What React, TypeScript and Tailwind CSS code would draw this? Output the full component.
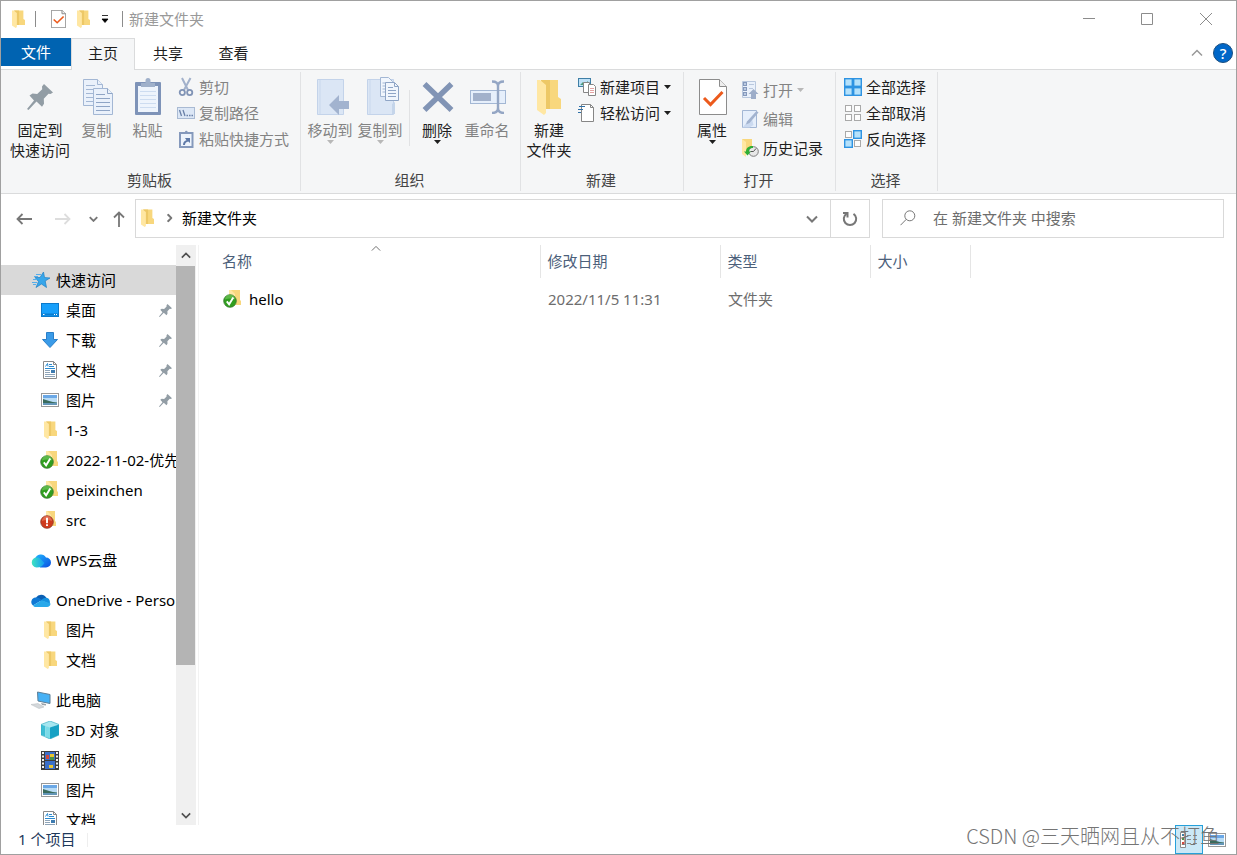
import type { ReactNode } from 'react';
import clsx from 'clsx';

interface IconProps {
  className?: string;
}

/* ---------- 通用图标 ---------- */

const FolderIcon = ({ className = 'h-[18px] w-[13px]' }: IconProps) => (
  <svg viewBox="0 0 24 36" className={className} preserveAspectRatio="none" aria-hidden="true">
    <path d="M4 1h17v17l3 2v10H7z" fill="#f8d77d" />
    <path d="M4 1h9v29H7z" fill="#edc866" />
    <path d="M0 1h3l6 5v28l-2 2-7-5z" fill="#ffe7a3" />
  </svg>
);

const SyncedFolderIcon = () => (
  <svg viewBox="0 0 20 20" className="size-5 shrink-0" aria-hidden="true">
    <path d="M6 1h11v10l1 1v4H6z" fill="#f8d77d" />
    <path d="M6 1h2l4 4v12l-6-2z" fill="#ffe7a3" />
    <circle cx="7" cy="12" r="6.300" fill="#2f9e1e" stroke="#3b7a33" strokeWidth=".800" />
    <path d="M2 10.500a5 5 0 0 1 10 0c-3-1.500-7-1.500-10 0z" fill="#7ccb63" opacity=".6" />
    <path d="M3.800 12.300l2.300 3L10.300 8.500" fill="none" stroke="#fff" strokeWidth="1.900" />
  </svg>
);

const WarningFolderIcon = () => (
  <svg viewBox="0 0 20 20" className="size-5 shrink-0" aria-hidden="true">
    <path d="M6 1h9v10l1 1v4H6z" fill="#f8d77d" />
    <path d="M6 1h1l4 4v12l-5-2z" fill="#ffe7a3" />
    <circle cx="7" cy="12" r="6.300" fill="#cf3a1d" stroke="#8d3a2b" strokeWidth=".800" />
    <path d="M2 11a5 5 0 0 1 10 0c-3-1.500-7-1.500-10 0z" fill="#ee8b6d" opacity=".6" />
    <path d="M7 7.800v5.400M7 14.300v1.700" stroke="#fff" strokeWidth="1.900" />
  </svg>
);

const PinIcon = ({ className = 'size-[13px]' }: IconProps) => (
  <svg viewBox="0 0 26 26" className={className} aria-hidden="true">
    <path
      d="M17 0l9 8.500-2.500 1.500-2-.3-4.700 5 .2 5-2 3-5.500-5.200L1.500 26 0 25l7-8.500-4.500-5 3-2 4.700.5 5-4.800-.2-2.700z"
      fill="#929da5"
    />
  </svg>
);

const DocCheckIcon = ({ className }: IconProps) => (
  <svg viewBox="0 0 28 36" className={className} preserveAspectRatio="none" aria-hidden="true">
    <path
      d="M.500 .500h20l7 7v28H.500z"
      fill="#fff"
      stroke="#8c8c8c"
      vectorEffect="non-scaling-stroke"
    />
    <path d="M20.500 .500v7h7" fill="#eee" stroke="#8c8c8c" vectorEffect="non-scaling-stroke" />
    <path d="M5 19l6.500 6.500L23.500 13" fill="none" stroke="#ec5a1c" strokeWidth="3" />
  </svg>
);

const Caret = ({ className = 'text-[#1e1e1e]' }: IconProps) => (
  <svg viewBox="0 0 7 4" className={clsx('h-1 w-[7px] shrink-0', className)} aria-hidden="true">
    <path d="M0 0h7L3.500 4z" fill="currentColor" />
  </svg>
);

const Chevron = ({ className }: IconProps) => (
  <svg viewBox="0 0 12 8" className={className} fill="none" stroke="currentColor" aria-hidden="true">
    <path d="M1 1.500l5 5 5-5" />
  </svg>
);

/* ---------- 功能区图标 ---------- */

const CopyIcon = () => (
  <svg viewBox="0 0 32 38" className="ml-0.5 h-[38px] w-8" fill="#eaf1fb" stroke="#a3b7d4" aria-hidden="true">
    <path d="M1.500 1.500h14l5 5v21h-19z" />
    <path d="M15.500 1.500v5h5" />
    <path d="M4 7.500h9M4 11.500h13M4 15.500h8M4 19.500h8M4 23.500h8" />
    <path d="M11.500 10.500h14l5 5v21h-19z" />
    <path d="M25.500 10.500v5h5M14 16.500h9M14 20.500h14M14 24.500h14M14 28.500h14M14 32.500h14" stroke="#8fa5c6" />
  </svg>
);

const PasteIcon = () => (
  <svg viewBox="0 0 28 38" className="h-[38px] w-7" aria-hidden="true">
    <rect x="1" y="4" width="26" height="33" rx="1" fill="#7e93b8" />
    <rect x="4" y="8" width="20" height="26" fill="#eef4fc" />
    <path d="M6 13.500h16M6 17.500h16M6 21.500h16M6 25.500h16M6 29.500h16" stroke="#cddcf0" />
    <path d="M7 9V5h4.500V2.500a2.500 2.500 0 0 1 5 0V5H21v4z" fill="#9fb0ca" />
  </svg>
);

const CutIcon = () => (
  <svg viewBox="0 0 18 20" className="h-5 w-[18px]" fill="none" aria-hidden="true">
    <path d="M5 1l6 12M13.500 1L7 13" stroke="#a2b1cb" strokeWidth="2" />
    <circle cx="5.300" cy="15.500" r="2.600" stroke="#8194b6" strokeWidth="1.800" />
    <circle cx="12.700" cy="15.500" r="2.600" stroke="#8194b6" strokeWidth="1.800" />
  </svg>
);

const CopyPathIcon = () => (
  <svg viewBox="0 0 18 12" className="h-3 w-[18px]" aria-hidden="true">
    <rect x=".500" y=".500" width="17" height="11" fill="#dce7f6" stroke="#a9bad3" />
    <path d="M2.500 3l2 6M6 3l2 6M9.500 8.500h1.500M12 8.500h1.500M14.500 8.500h1.500" stroke="#6980a8" strokeWidth="1.300" />
  </svg>
);

const PasteShortcutIcon = () => (
  <svg viewBox="0 0 18 20" className="h-5 w-[18px]" aria-hidden="true">
    <path d="M3 4h12.500v14H3z" fill="#eef4fc" stroke="#8599bc" strokeWidth="2" />
    <path d="M5.500 5V3H8a1.300 1.300 0 0 1 2.600 0H13v2z" fill="#8599bc" />
    <path d="M6 16c0-3 1.500-4.500 3.500-4.800L8 9h5v5l-1.700-1.600C9 13 8 14 8 16z" fill="#5f7aa8" />
  </svg>
);

const MoveToIcon = () => (
  <svg viewBox="0 0 34 40" className="ml-1.5 h-10 w-[34px]" aria-hidden="true">
    <path d="M1.500 2.500h26v35h-26z" fill="#dbe6f5" stroke="#c3d3ea" />
    <path d="M4 3v34" stroke="#c9d8ed" />
    <path d="M13 28l10-10v6h10v8H23v6z" fill="#a2b3cf" />
  </svg>
);

const CopyToIcon = () => (
  <svg viewBox="0 0 34 40" className="ml-1.5 h-10 w-[34px]" aria-hidden="true">
    <path d="M1.500 2.500h26v35h-26z" fill="#dbe6f5" stroke="#c3d3ea" />
    <path d="M4 3v34" stroke="#c9d8ed" />
    <path d="M26 37V27l3-2v12z" fill="#c5d5ea" />
    <path d="M14.500 .500h8l4 4v15h-12z" fill="#f1f6fd" stroke="#a3b7d4" />
    <path d="M16.500 6h4M16.500 9h3M16.500 12h3M16.500 15h3" stroke="#a3b7d4" />
    <path d="M19.500 5.500h9l4 4v14h-13z" fill="#f1f6fd" stroke="#8fa5c6" />
    <path d="M28.500 5.500v4h4M22 10.500h5M22 13.500h8M22 16.500h8M22 19.500h8" fill="none" stroke="#8fa5c6" />
  </svg>
);

const DeleteIcon = () => (
  <svg viewBox="0 0 32 32" className="ml-0.5 size-8" aria-hidden="true">
    <path d="M2.500 3l27 26M29.500 3l-27 26" stroke="#8194b5" strokeWidth="5.500" />
  </svg>
);

const RenameIcon = () => (
  <svg viewBox="0 0 38 34" className="ml-0.5 h-[34px] w-[38px]" fill="none" aria-hidden="true">
    <rect x="1.500" y="10.500" width="35" height="13" fill="#e6effb" stroke="#a3b7d4" />
    <rect x="4" y="13" width="18" height="8" fill="#a2b1cb" />
    <path
      d="M23 1.500c4 0 6 1 6 4.500v22c0 3.500-2 5-6 5M35 1.500c-4 0-6 1-6 4.500M35 33c-4 0-6-1.500-6-5"
      stroke="#94a6c4"
      strokeWidth="2.400"
    />
  </svg>
);

const NewItemIcon = () => (
  <svg viewBox="0 0 18 20" className="h-5 w-[18px]" aria-hidden="true">
    <rect x=".500" y="1.500" width="12" height="8" fill="#bfe1f7" stroke="#3f7fa6" />
    <path d="M2 8l3-3 2 2 3-3v4z" fill="#4b9b7b" />
    <path d="M5.500 5.500h6v10h-6z" fill="#fff" stroke="#868686" />
    <path d="M10.500 7.500h5l2 2v9h-7z" fill="#fff" stroke="#868686" />
    <path d="M12 11.500h4M12 13.500h4M12 15.500h4" stroke="#e4a3a3" />
  </svg>
);

const EasyAccessIcon = () => (
  <svg viewBox="0 0 18 20" className="h-5 w-[18px]" aria-hidden="true">
    <path d="M3.500 1.500h9l3 3v14h-12z" fill="#fff" stroke="#868686" />
    <path d="M12.500 1.500v3h3" fill="none" stroke="#868686" />
    <path d="M1 3.500h6M0 6.500h5M0 9.500h3" stroke="#2f71a8" strokeWidth="1.200" />
  </svg>
);

const OpenIcon = () => (
  <svg viewBox="0 0 18 20" className="h-5 w-[18px]" aria-hidden="true">
    <path d="M1.500 1.500h13v16h-13z" fill="#eaf1fb" stroke="#b9c8de" />
    <path d="M2 2h4v4H2zM2 7h4v4H2zM2 12h4v4H2z" fill="#8599bc" />
    <path d="M3 3h2v2H3zM3 8h2v2H3zM3 13h2v2H3z" fill="#bccbe2" />
    <path d="M8 4.500h5M8 8.500h4" stroke="#b9c8de" />
    <path d="M12.500 9l5 5h-2.500v5h-5v-5H7.500z" fill="#9dadc9" />
  </svg>
);

const EditIcon = () => (
  <svg viewBox="0 0 18 20" className="h-5 w-[18px]" aria-hidden="true">
    <path d="M1.500 1.500h14v17h-14z" fill="#e6effb" stroke="#a3b7d4" />
    <path d="M1.500 18.500l9-10.500 2 8-4 2.500z" fill="#cbdaf0" />
    <path d="M5 15.500l1-3L15.500 2l2 1.500-9 10.500z" fill="#a2b3cf" />
  </svg>
);

const HistoryIcon = () => (
  <svg viewBox="0 0 18 20" className="h-5 w-[18px]" aria-hidden="true">
    <path d="M1 1h10v14H1z" fill="#f8d77d" />
    <path d="M1 1l4 3v15l-4-3z" fill="#ffe7a3" />
    <circle cx="12.500" cy="13.500" r="4.800" fill="#e8e8e8" stroke="#7d7d7d" />
    <path d="M12.500 13.500l2.500-3M12.500 13.500h-3" stroke="#555" />
    <path d="M12 8c-4-.5-7 1.800-7 5.500H3l3.500 4 3.500-4H8c0-2.500 1.500-3.800 4-3.500z" fill="#2fae35" />
  </svg>
);

// 选中的方块边框相连，未选中的方块之间留空
const TilesIcon = ({ tiles }: { tiles: ('on' | 'off')[] }) => (
  <svg viewBox="0 0 18 18" className="size-[18px]" aria-hidden="true">
    {tiles.map((tile, i) => {
      const x = i % 2 === 0 ? 0 : 9;
      const y = i < 2 ? 0 : 9;
      return tile === 'on' ? (
        <rect key={i} x={x + 0.7} y={y + 0.7} width="7.600" height="7.600" fill="#b5e1fb" stroke="#2e93e2" strokeWidth="1.400" />
      ) : (
        <rect key={i} x={x + 1.5} y={y + 1.5} width="6" height="6" fill="#fdfdfd" stroke="#a9a9a9" />
      );
    })}
  </svg>
);

/* ---------- 导航栏图标 ---------- */

const StarIcon = () => (
  <svg viewBox="0 0 18 16" className="h-4 w-[18px]" aria-hidden="true">
    <path
      d="M11.500 0l1 5.500 5.500.5-4.800 3 1.300 6.500-5-3.500L4 15.500l2.500-6L3 5.500h5z"
      fill="#37a6ea"
      stroke="#1f7fc4"
      strokeWidth=".700"
    />
    <path d="M4 2.500h5M2 4.500h4M1 7.500h4M0 10.500h5M1 12.500h3" stroke="#55aeea" />
  </svg>
);

const DesktopIcon = () => (
  <svg viewBox="0 0 18 14" className="h-3.5 w-[18px]" aria-hidden="true">
    <rect x=".500" y=".500" width="17" height="13" fill="#18a0fb" stroke="#0c7acb" />
    <path d="M1 11.500h16" stroke="#0a7ccf" strokeWidth="2" />
    <path d="M2 11.500h1.500M13 11.500h1M15 11.500h1" stroke="#fff" />
  </svg>
);

const DownloadIcon = () => (
  <svg viewBox="0 0 18 18" className="size-[18px]" aria-hidden="true">
    <path d="M5.500 1.500h7v7h4L9 16.500 1.500 8.500h4z" fill="#3a9be8" stroke="#2a7fc8" />
  </svg>
);

const DocumentIcon = () => (
  <svg viewBox="0 0 16 18" className="h-[18px] w-4" aria-hidden="true">
    <path d="M1.500 .500h10l3 3v14h-13z" fill="#fff" stroke="#8a8a8a" />
    <path d="M11.500 .500v3h3" fill="none" stroke="#8a8a8a" />
    <path d="M3.500 5.500l2-3 .5 3M7 3.500h3M7 5.500h5M3 7.500h10" fill="none" stroke="#2b8ad0" />
    <path d="M3 9.500h5M3 11.500h5M3 13.500h10M3 15.500h10" stroke="#8ea4b8" />
    <path d="M9 9h4v3H9z" fill="#3d7bb0" />
  </svg>
);

const PictureIcon = () => (
  <svg viewBox="0 0 18 14" className="h-3.5 w-[18px]" aria-hidden="true">
    <rect x=".500" y=".500" width="17" height="13" fill="#fff" stroke="#999" />
    <rect x="2" y="2" width="14" height="10" fill="#b9dcf6" />
    <path d="M2 2h14v3H2z" fill="#6ba8e6" />
    <path d="M2 6c4 1 8 3 14 3.500v.5H2z" fill="#3a6b5d" />
    <path d="M2 10h14v2H2z" fill="#6396b8" />
  </svg>
);

const WpsCloudIcon = () => (
  <svg viewBox="0 0 20 15" className="h-[15px] w-5" aria-hidden="true">
    <defs>
      <linearGradient id="wps" x1="0" x2="1" y1="0" y2="1">
        <stop offset="0" stopColor="#20b4ff" />
        <stop offset="1" stopColor="#0a4fe0" />
      </linearGradient>
      <linearGradient id="wpsLeft" x1="0" x2="1">
        <stop offset="0" stopColor="#3fe3c0" />
        <stop offset="1" stopColor="#149bf5" />
      </linearGradient>
    </defs>
    <path d="M4 6a6 6 0 0 1 11-1.500 5 5 0 0 1 0 10H9z" fill="url(#wps)" />
    <path d="M6 4.500c3 0 4 2 7.500 5.500-2 3-4 4.500-8 4.500a5 5 0 0 1 .5-10z" fill="url(#wpsLeft)" />
  </svg>
);

const OneDriveIcon = () => (
  <svg viewBox="0 0 20 14" className="h-3.5 w-5" aria-hidden="true">
    <path d="M5 4.500A6 6 0 0 1 15.500 5l-5 4z" fill="#0a5fb4" />
    <path d="M4.500 4.500C7 4 9 5.500 11 7L2 12.500A4.500 4.500 0 0 1 4.500 4.500z" fill="#0f78d4" />
    <path d="M10 7.500c2-2 3.500-3 6-2.500 1.500.2 2.500 1.500 2.800 3L19 11z" fill="#1490df" />
    <path d="M2 12.500L10.500 7.300 19.500 10.500c0 2-1.500 3.500-3.500 3.500H5c-1.300 0-2.300-.5-3-1.500z" fill="#28a8ea" />
  </svg>
);

const ThisPcIcon = () => (
  <svg viewBox="0 0 20 18" className="h-[18px] w-5" aria-hidden="true">
    <path d="M6.500 1l12.500 2.500v9L7 10z" fill="#46b1f5" stroke="#5d7f97" />
    <path d="M10 12l5 1v1.500l-4-.5z" fill="#9aa3aa" />
    <path d="M0 13.500l7-1 6 3.500-5 1.500z" fill="#d4d8db" stroke="#b5babf" strokeWidth=".500" />
  </svg>
);

const CubeIcon = () => (
  <svg viewBox="0 0 18 18" className="size-[18px]" aria-hidden="true">
    <path d="M0 3.500L9 0l9 3.500L9 7z" fill="#a6e6f0" />
    <path d="M0 3.500L4.500 5v10.500L0 14z" fill="#3dbdd4" />
    <path d="M4.500 5L9 6.500V18l-4.500-2z" fill="#7adbe8" />
    <path d="M18 3.500L9 6.500V18l9-4z" fill="#16a1c4" />
    <path d="M0 3.500L9 0l9 3.500V14l-9 4-9-4z" fill="none" stroke="#2da7bd" strokeWidth=".600" />
  </svg>
);

const VideoIcon = () => (
  <svg viewBox="0 0 18 19" className="h-[19px] w-[18px]" aria-hidden="true">
    <path d="M0 0h18v19H0z" fill="#3c3c3c" />
    <path d="M4 1h10v8H4zM4 10h10v8H4z" fill="#3b6fc9" />
    <path d="M5 4h3v4H5z" fill="#d4483b" />
    <path d="M9 3h4v3H9zM8 14h4v3H8z" fill="#e8c531" />
    <path d="M9 6h4v3H9z" fill="#4a9148" />
    <path d="M2 1v17M16 1v17" stroke="#f2f2f2" strokeWidth="2" strokeDasharray="2 1.500" />
  </svg>
);

/* ---------- 功能区组件 ---------- */

interface BigButtonProps {
  icon: ReactNode;
  lines: string[];
  caret?: boolean;
  disabled?: boolean;
  className?: string;
}

const BigButton = ({ icon, lines, caret, disabled, className = 'w-[50px]' }: BigButtonProps) => (
  <button
    type="button"
    disabled={disabled}
    className={clsx(
      'flex shrink-0 flex-col items-center self-start whitespace-nowrap leading-5',
      disabled ? 'text-[#838383]' : 'text-[#1e1e1e]',
      className,
    )}
  >
    <span className="flex h-[46px] items-center justify-center">{icon}</span>
    {lines.map((line) => (
      <span key={line}>{line}</span>
    ))}
    {caret && <Caret className={disabled ? 'text-[#b8b8b8]' : 'text-[#1e1e1e]'} />}
  </button>
);

interface SmallButtonProps {
  icon: ReactNode;
  label: string;
  caret?: boolean;
  disabled?: boolean;
  className?: string;
}

const SmallButton = ({ icon, label, caret, disabled, className = 'h-[26px]' }: SmallButtonProps) => (
  <button
    type="button"
    disabled={disabled}
    className={clsx(
      'flex items-center gap-1 whitespace-nowrap',
      disabled ? 'text-[#838383]' : 'text-[#1e1e1e]',
      className,
    )}
  >
    <span className="flex w-[18px] justify-center">{icon}</span>
    <span>{label}</span>
    {caret && <Caret className={disabled ? 'text-[#b8b8b8]' : 'text-[#1e1e1e]'} />}
  </button>
);

interface RibbonGroupProps {
  label: string;
  className: string;
  children: ReactNode;
}

const RibbonGroup = ({ label, className, children }: RibbonGroupProps) => (
  <section
    aria-label={label}
    className={clsx('flex shrink-0 flex-col justify-between border-r border-[#e1e2e4] pb-px pt-0.5', className)}
  >
    <div className="flex">{children}</div>
    <div className="pr-0.5 text-center leading-5 text-[#444]">{label}</div>
  </section>
);

const Ribbon = () => (
  <div className="flex h-[124px] shrink-0 border-b border-[#dadbdc] bg-[#f5f6f7] py-0.5">
    <RibbonGroup label="剪贴板" className="w-[300px]">
      <BigButton
        icon={<PinIcon className="size-[26px]" />}
        lines={['固定到', '快速访问']}
        className="ml-2 w-[62px]"
      />
      <BigButton icon={<CopyIcon />} lines={['复制']} disabled className="w-[51px]" />
      <BigButton icon={<PasteIcon />} lines={['粘贴']} disabled className="w-[51px]" />
      <div className="ml-1">
        <SmallButton icon={<CutIcon />} label="剪切" disabled />
        <SmallButton icon={<CopyPathIcon />} label="复制路径" disabled />
        <SmallButton icon={<PasteShortcutIcon />} label="粘贴快捷方式" disabled />
      </div>
    </RibbonGroup>

    <RibbonGroup label="组织" className="w-[220px]">
      <BigButton icon={<MoveToIcon />} lines={['移动到']} caret disabled className="ml-1 w-[50px]" />
      <BigButton icon={<CopyToIcon />} lines={['复制到']} caret disabled />
      <div className="ml-1 mr-0.5 mt-4 h-14 w-px bg-[#e1e2e4]" />
      <BigButton icon={<DeleteIcon />} lines={['删除']} caret />
      <BigButton icon={<RenameIcon />} lines={['重命名']} disabled />
    </RibbonGroup>

    <RibbonGroup label="新建" className="w-[163px]">
      <BigButton
        icon={<FolderIcon className="h-9 w-6" />}
        lines={['新建', '文件夹']}
        className="ml-[3px] w-[50px]"
      />
      <div className="ml-1">
        <SmallButton icon={<NewItemIcon />} label="新建项目" caret />
        <SmallButton icon={<EasyAccessIcon />} label="轻松访问" caret />
      </div>
    </RibbonGroup>

    <RibbonGroup label="打开" className="w-[152px]">
      <BigButton
        icon={<DocCheckIcon className="ml-0.5 h-9 w-7" />}
        lines={['属性']}
        caret
        className="ml-[3px] w-[50px]"
      />
      <div className="ml-1 mt-px">
        <SmallButton icon={<OpenIcon />} label="打开" caret disabled className="h-[29px]" />
        <SmallButton icon={<EditIcon />} label="编辑" disabled className="h-[29px]" />
        <SmallButton icon={<HistoryIcon />} label="历史记录" className="h-[29px]" />
      </div>
    </RibbonGroup>

    <RibbonGroup label="选择" className="w-[102px]">
      <div className="ml-2">
        <SmallButton icon={<TilesIcon tiles={['on', 'on', 'on', 'on']} />} label="全部选择" />
        <SmallButton icon={<TilesIcon tiles={['off', 'off', 'off', 'off']} />} label="全部取消" />
        <SmallButton icon={<TilesIcon tiles={['off', 'on', 'on', 'off']} />} label="反向选择" />
      </div>
    </RibbonGroup>
  </div>
);

/* ---------- 标题栏和选项卡 ---------- */

const TitleBar = () => (
  <header className="flex h-[37px] shrink-0 items-center pb-px pr-px">
    <div className="flex items-center pl-[11px]">
      <FolderIcon />
      <span className="ml-[10px] h-4 w-px bg-[#8c8c8c]" />
      <button type="button" aria-label="属性" className="ml-[15px]">
        <DocCheckIcon className="h-[18px] w-[15px]" />
      </button>
      <button type="button" aria-label="新建文件夹" className="ml-[11px]">
        <FolderIcon />
      </button>
      <button type="button" aria-label="自定义快速访问工具栏" className="ml-[11px]">
        <svg viewBox="0 0 8 8" className="size-2" aria-hidden="true">
          <path d="M1 .500h6M1 4h6L4 7.500z" fill="#000" stroke="#000" strokeWidth=".800" />
        </svg>
      </button>
      <span className="ml-[13px] h-4 w-px bg-[#8c8c8c]" />
      <h1 className="ml-1.5 text-[#999]">新建文件夹</h1>
    </div>
    <div className="ml-auto flex h-full text-[#8c8c8c]">
      <button type="button" aria-label="最小化" className="flex w-[58px] items-center justify-center">
        <svg viewBox="0 0 12 12" className="size-3" stroke="currentColor" aria-hidden="true">
          <path d="M0 5.500h12" />
        </svg>
      </button>
      <button type="button" aria-label="最大化" className="flex w-[58px] items-center justify-center">
        <svg viewBox="0 0 12 12" className="size-3" fill="none" stroke="currentColor" aria-hidden="true">
          <path d="M.500 .500h11v11H.500z" />
        </svg>
      </button>
      <button type="button" aria-label="关闭" className="flex w-[59px] items-center justify-center">
        <svg viewBox="0 0 12 12" className="size-3" stroke="currentColor" aria-hidden="true">
          <path d="M0 0l12 12M12 0L0 12" />
        </svg>
      </button>
    </div>
  </header>
);

const TabBar = () => (
  <div className="flex h-8 shrink-0">
    <div role="tablist" className="flex text-[#1e1e1e]">
      <div className="border-b border-[#dadbdc]">
        <button type="button" role="tab" className="h-7 w-[70px] bg-[#0063b1] text-white">
          文件
        </button>
      </div>
      <button
        type="button"
        role="tab"
        aria-selected="true"
        className="w-16 border-x border-t border-[#dadbdc] bg-[#f5f6f7] pb-[3px]"
      >
        主页
      </button>
      <button type="button" role="tab" className="w-[66px] border-b border-[#dadbdc] pb-px">
        共享
      </button>
      <button type="button" role="tab" className="w-[65px] border-b border-[#dadbdc] pb-px">
        查看
      </button>
    </div>
    <div className="flex flex-1 items-center justify-end gap-2.5 border-b border-[#dadbdc] pb-px pr-[3px]">
      <button type="button" aria-label="最小化功能区">
        <Chevron className="h-2 w-3 rotate-180 stroke-[1.5] text-[#999]" />
      </button>
      <button
        type="button"
        aria-label="帮助"
        className="flex size-5 items-center justify-center rounded-full border border-[#1b4f80] bg-[#0067c8] text-[15px] font-medium leading-none text-white"
      >
        ?
      </button>
    </div>
  </div>
);

/* ---------- 地址栏 ---------- */

const AddressRow = () => (
  <div className="flex h-[51px] shrink-0 pb-[7px] pr-3 pt-[5px]">
    <div className="flex w-[134px] shrink-0 text-[#777]">
      <button type="button" aria-label="后退" className="flex w-[46px] items-center justify-center">
        <svg viewBox="0 0 16 12" className="h-3 w-4" fill="none" stroke="currentColor" strokeWidth="1.800" aria-hidden="true">
          <path d="M16 6H1.500M6.500 1l-5 5 5 5" />
        </svg>
      </button>
      <button type="button" aria-label="前进" disabled className="flex w-8 items-center justify-center text-[#ddd]">
        <svg viewBox="0 0 16 12" className="h-3 w-4" fill="none" stroke="currentColor" strokeWidth="1.800" aria-hidden="true">
          <path d="M0 6h14.500M9.500 1l5 5-5 5" />
        </svg>
      </button>
      <button type="button" aria-label="最近浏览的位置" className="flex w-[29px] items-center justify-center">
        <Chevron className="h-1.5 w-[9px] stroke-[2.5]" />
      </button>
      <button type="button" aria-label="上移" className="flex w-[22px] items-center justify-center">
        <svg viewBox="0 0 12 16" className="h-4 w-3" fill="none" stroke="currentColor" strokeWidth="1.800" aria-hidden="true">
          <path d="M6 16V1.500M1 6.500l5-5 5 5" />
        </svg>
      </button>
    </div>
    <div className="flex min-w-0 flex-1 items-center border border-[#d9d9d9]">
      <nav aria-label="地址" className="flex flex-1 items-center pb-0.5 pl-[5px]">
        <FolderIcon />
        <Chevron className="ml-[11px] h-1.5 w-[9px] -rotate-90 stroke-[2.5] text-[#777]" />
        <a href="#" className="ml-2 text-black">
          新建文件夹
        </a>
      </nav>
      <button type="button" aria-label="以前的位置" className="flex w-9 items-center justify-center text-[#777]">
        <Chevron className="h-2 w-3 stroke-2" />
      </button>
      <button
        type="button"
        aria-label="刷新"
        className="flex w-[39px] items-center justify-center self-stretch border-l border-[#d9d9d9] text-[#777]"
      >
        <svg viewBox="0 0 16 16" className="size-4" fill="none" stroke="currentColor" strokeWidth="2" aria-hidden="true">
          <path d="M11.500 2.800A6.200 6.200 0 1 1 4.500 2.800" />
          <path d="M1 1.900h4.500v4.500" />
        </svg>
      </button>
    </div>
    <label className="ml-3 flex w-[342px] shrink-0 items-center border border-[#d9d9d9] pb-0.5 pl-[17px]">
      <svg viewBox="0 0 16 16" className="size-4 shrink-0" fill="none" stroke="#777" aria-hidden="true">
        <circle cx="9.800" cy="5.800" r="5" />
        <path d="M6.300 9.300L.500 15.200" />
      </svg>
      <input
        type="search"
        aria-label="搜索"
        placeholder="在 新建文件夹 中搜索"
        className="ml-[17px] min-w-0 flex-1 outline-none placeholder:text-[#6d6d6d]"
      />
    </label>
  </div>
);

/* ---------- 导航窗格 ---------- */

interface NavItem {
  label: string;
  icon: ReactNode;
  root?: boolean;
  pinned?: boolean;
  active?: boolean;
}

const navSections: NavItem[][] = [
  [
    { label: '快速访问', icon: <StarIcon />, root: true, active: true },
    { label: '桌面', icon: <DesktopIcon />, pinned: true },
    { label: '下载', icon: <DownloadIcon />, pinned: true },
    { label: '文档', icon: <DocumentIcon />, pinned: true },
    { label: '图片', icon: <PictureIcon />, pinned: true },
    { label: '1-3', icon: <FolderIcon /> },
    { label: '2022-11-02-优先级队列', icon: <SyncedFolderIcon /> },
    { label: 'peixinchen', icon: <SyncedFolderIcon /> },
    { label: 'src', icon: <WarningFolderIcon /> },
  ],
  [{ label: 'WPS云盘', icon: <WpsCloudIcon />, root: true }],
  [
    { label: 'OneDrive - Personal', icon: <OneDriveIcon />, root: true },
    { label: '图片', icon: <FolderIcon /> },
    { label: '文档', icon: <FolderIcon /> },
  ],
  [
    { label: '此电脑', icon: <ThisPcIcon />, root: true },
    { label: '3D 对象', icon: <CubeIcon /> },
    { label: '视频', icon: <VideoIcon /> },
    { label: '图片', icon: <PictureIcon /> },
    { label: '文档', icon: <DocumentIcon /> },
  ],
];

const NavPane = () => (
  <div className="flex w-[198px] shrink-0 border-r border-[#f2f2f2] pr-0.5">
    <nav aria-label="导航窗格" className="flex min-w-0 flex-1 flex-col gap-2.5 overflow-hidden pt-5">
      {navSections.map((items, i) => (
        <ul key={i}>
          {items.map((item) => (
            <li key={item.label}>
              <a
                href="#"
                className={clsx(
                  'flex h-[30px] items-center text-black',
                  item.root ? 'pl-[29px]' : 'pl-[38px]',
                  item.active && 'bg-[#d9d9d9]',
                )}
              >
                <span className="flex w-[22px] shrink-0 justify-center">{item.icon}</span>
                <span
                  className={clsx(
                    'min-w-0 flex-1 overflow-hidden whitespace-nowrap',
                    item.root ? 'ml-1' : 'ml-[5px]',
                  )}
                >
                  {item.label}
                </span>
                {item.pinned && <PinIcon className="mr-1 size-[13px]" />}
              </a>
            </li>
          ))}
        </ul>
      ))}
    </nav>
    <div className="flex w-5 shrink-0 flex-col bg-[#f0f0f0] text-[#505050]">
      <button type="button" aria-label="向上滚动" className="flex h-[21px] items-center justify-center">
        <Chevron className="h-[7px] w-[10px] rotate-180 stroke-2" />
      </button>
      <div className="flex-1 pr-px">
        <div className="h-[74%] bg-[#b4b4b4]" />
      </div>
      <button type="button" aria-label="向下滚动" className="flex h-5 items-center justify-center">
        <Chevron className="h-[7px] w-[10px] stroke-2" />
      </button>
    </div>
  </div>
);

/* ---------- 文件列表 ---------- */

const files = [{ name: 'hello', date: '2022/11/5 11:31', type: '文件夹', size: '' }];

const FileList = () => (
  <main className="min-w-0 flex-1 overflow-hidden pl-[13px]">
    <table className="w-[758px] table-fixed text-left">
      <colgroup>
        <col className="w-[328px]" />
        <col className="w-[180px]" />
        <col className="w-[150px]" />
        <col className="w-[100px]" />
      </colgroup>
      <thead>
        <tr className="h-[33px] text-[#4c607a]">
          <th className="relative border-r border-[#e5e5e5] pb-0.5 pl-[10px] font-normal" aria-sort="ascending">
            名称
            <Chevron className="absolute left-1/2 top-0 h-[7px] w-[10px] rotate-180 -translate-x-1/2 text-[#555]" />
          </th>
          <th className="border-r border-[#e5e5e5] pb-0.5 pl-[7px] font-normal">修改日期</th>
          <th className="border-r border-[#e5e5e5] pb-0.5 pl-[7px] font-normal">类型</th>
          <th className="border-r border-[#e5e5e5] pb-0.5 pl-[7px] font-normal">大小</th>
        </tr>
      </thead>
      <tbody>
        {files.map((file) => (
          <tr key={file.name} className="h-[43px] text-[#6d6d6d]">
            <td className="pb-0.5 pl-[11px]">
              <a href="#" className="flex items-center gap-1.5 text-black">
                <SyncedFolderIcon />
                {file.name}
              </a>
            </td>
            <td className="pb-0.5 pl-2">{file.date}</td>
            <td className="pb-0.5 pl-2">{file.type}</td>
            <td className="pb-0.5 pl-2">{file.size}</td>
          </tr>
        ))}
      </tbody>
    </table>
  </main>
);

/* ---------- 状态栏 ---------- */

const StatusBar = () => (
  <footer className="flex h-[29px] shrink-0 items-center pl-[17px] pr-[10px] text-[#1e395b]">
    <span className="pb-0.5">1 个项目</span>
    <span className="ml-3 h-3.5 w-px bg-[#eee]" />
    <div className="ml-auto flex h-full items-center gap-[5px]">
      <button
        type="button"
        aria-label="详细信息"
        aria-pressed="true"
        className="flex h-full w-7 items-center justify-center border border-[#26a0da] bg-[#cbe8f6]"
      >
        <svg viewBox="0 0 18 16" className="h-4 w-[18px]" aria-hidden="true">
          <path d="M.500 .500h5v15h-5z" fill="#fff" stroke="#8a8a8a" />
          <path d="M2 2h2v2H2z" fill="#3f7fa6" />
          <path d="M2 6h2v2H2z" fill="#4a9148" />
          <path d="M2 10h2v2H2z" fill="#d4483b" />
          <path d="M7 3.500h4M7 7.500h4M7 11.500h4M13 3.500h4M13 7.500h4M13 11.500h4" stroke="#8a8a8a" />
        </svg>
      </button>
      <button type="button" aria-label="大缩略图">
        <PictureIcon />
      </button>
    </div>
  </footer>
);

const App = () => {
  return (
    <div className="relative flex h-screen flex-col overflow-hidden border border-[#a0a0a0] bg-white font-['Noto_Sans','Noto_Sans_CJK_SC',sans-serif] text-[15px] leading-5">
      <TitleBar />
      <TabBar />
      <Ribbon />
      <AddressRow />
      <div className="flex min-h-0 flex-1">
        <NavPane />
        <FileList />
      </div>
      <StatusBar />
      <div className="pointer-events-none absolute bottom-1 right-4 whitespace-nowrap font-['Noto_Sans_CJK_SC',sans-serif] text-[20px] font-light leading-7 text-[#757575]">
        CSDN @三天晒网且从不打鱼
      </div>
    </div>
  );
};

export default App;
